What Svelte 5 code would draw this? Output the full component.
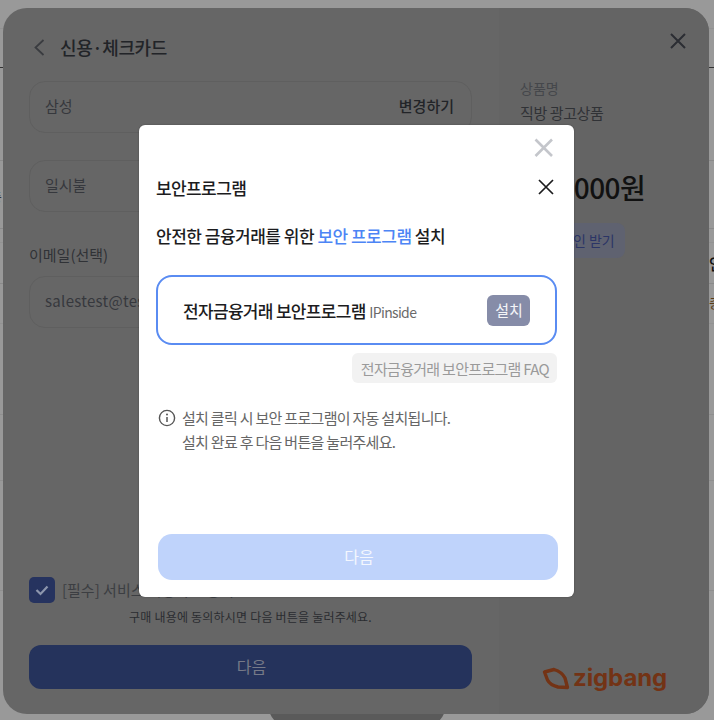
<script>
  const rows = [
    { h: 29, c: '#929292' }, { h: 39, c: '#333' }, { h: 93, c: '#8a8a8a' }, { h: 68, c: '#8a8a8a' },
    { h: 14, c: '#929292' }, { h: 41, c: '#8a8a8a' }, { h: 40, c: '#929292' }, { h: 91, c: '#8f8f8f' }, { h: 66, c: '#8f8f8f' }, { h: 110, c: '#8f8f8f' }
  ];
</script>

<div class="page">
  <div class="lines">
    {#each rows as r}
      <div class="line" style="height:{r.h}px;border-bottom-color:{r.c}"></div>
    {/each}
  </div>
  <span class="edge edge-left">총</span>
  <span class="edge edge-right">안</span>
  <span class="edge edge-right2">총</span>
  <div class="pill"></div>

  <section class="sheet">
    <div class="col-left">
      <header class="head">
        <svg width="14" height="18" viewBox="0 0 14 18" fill="none"><path d="M11.5 1 3.500 8.500l8 7.500" stroke="#3a3c40" stroke-width="1.800"/></svg>
        <h2>신용·체크카드</h2>
      </header>
      <div class="field first"><span>삼성</span><b>변경하기</b></div>
      <div class="field second"><span>일시불</span></div>
      <div class="label">이메일(선택)</div>
      <div class="field third"><span>salestest@test.com</span></div>
      <div class="grow"></div>
      <div class="agree">
        <span class="check">
          <svg width="16" height="12" viewBox="0 0 16 12" fill="none"><path d="M2.500 6 6.500 10 13.500 2.500" stroke="#8d96ad" stroke-width="2.200"/></svg>
        </span>
        <span class="agree-text">[필수] 서비스 이용약관 동의</span>
      </div>
      <p class="note">구매 내용에 동의하시면 다음 버튼을 눌러주세요.</p>
      <div class="next">다음</div>
    </div>
    <aside class="col-right">
      <svg class="close-outer" width="18" height="18" viewBox="0 0 18 18" fill="none"><path d="M2 2l14 14M16 2 2 16" stroke="#2b2d33" stroke-width="2"/></svg>
      <div class="k">상품명</div>
      <div class="v">직방 광고상품</div>
      <div class="k k2">결제금액</div>
      <div class="price">110,000원</div>
      <div class="coupon">할인 받기</div>
      <div class="grow"></div>
      <div class="logo">
        <svg width="28" height="24" viewBox="0 0 28 24" fill="none"><path d="M2.500 6 12 3.500Q20 6 23 12L25.500 21.500 16 21Q8 19 5.500 14Z" stroke="#733315" stroke-width="3.400" stroke-linejoin="round"/></svg>
        <span>zigbang</span>
      </div>
    </aside>
  </section>

  <div class="dialog">
    <div class="x-top">
      <svg width="20" height="20" viewBox="0 0 20 20" fill="none"><path d="M1.500 1.500 18 18M18 1.500 1.500 18" stroke="#c4c6cb" stroke-width="2.600"/></svg>
    </div>
    <div class="title-row">
      <h3>보안프로그램</h3>
      <svg width="16" height="16" viewBox="0 0 16 16" fill="none"><path d="M1 1l14 14M15 1 1 15" stroke="#1c1c1e" stroke-width="1.700"/></svg>
    </div>
    <p class="lead">안전한 금융거래를 위한 <em>보안 프로그램</em> 설치</p>
    <div class="card">
      <div class="card-text"><strong>전자금융거래 보안프로그램</strong> <small>IPinside</small></div>
      <div class="install">설치</div>
    </div>
    <div class="faq-row"><div class="faq">전자금융거래 보안프로그램 FAQ</div></div>
    <div class="info">
      <svg width="18" height="18" viewBox="0 0 18 18" fill="none"><circle cx="9" cy="9" r="7.600" stroke="#555" stroke-width="1.400"/><path d="M9 8v5" stroke="#555" stroke-width="1.500"/><circle cx="9" cy="5.400" r="1" fill="#555"/></svg>
      <p>설치 클릭 시 보안 프로그램이 자동 설치됩니다.<br />설치 완료 후 다음 버튼을 눌러주세요.</p>
    </div>
    <div class="grow"></div>
    <div class="dialog-next"><span>다음</span></div>
  </div>
</div>

<style>
  :global(body) {
    margin: 0;
    background: #999;
  }
  .page {
    position: relative;
    width: 714px;
    height: 720px;
    overflow: hidden;
    background: #999;
    font-family: "Noto Sans CJK KR", "Noto Sans", sans-serif;
    color: #2a2c30;
  }
  .lines {
    display: flex;
    flex-direction: column;
  }
  .line {
    box-sizing: border-box;
    border-bottom: 1px solid #8f8f8f;
  }
  .edge {
    position: absolute;
    font-size: 14px;
    line-height: 20px;
    color: #333;
  }
  .edge-left { left: -11px; top: 186px; }
  .edge-right { left: 709px; top: 253px; font-size: 16px; font-weight: 500; color: #111; }
  .edge-right2 { left: 709px; top: 292px; color: #5a3d18; }
  .pill {
    position: absolute;
    left: 268px;
    top: 680px;
    width: 178px;
    height: 48px;
    border-radius: 24px;
    background: #5a5a5a;
  }
  .sheet {
    position: absolute;
    left: 3px;
    top: 8px;
    width: 706px;
    height: 706px;
    display: flex;
    border-radius: 24px;
    background: #666;
    overflow: hidden;
  }
  .col-left {
    width: 496px;
    box-sizing: border-box;
    padding: 0 27px 25px 26px;
    display: flex;
    flex-direction: column;
  }
  .col-right {
    position: relative;
    flex: 1;
    box-sizing: border-box;
    padding: 70px 0 22px 21px;
    display: flex;
    flex-direction: column;
    background: #646464;
  }
  .grow { flex: 1; }
  .head {
    height: 73px;
    box-sizing: border-box;
    display: flex;
    align-items: center;
    gap: 14px;
    padding: 6px 0 0 3px;
  }
  h2 {
    margin: 0 0 2px;
    font-size: 18px;
    font-weight: 500;
    letter-spacing: -0.4px;
    color: #222428;
  }
  .field {
    height: 52px;
    box-sizing: border-box;
    border: 1px solid #5f5f5f;
    border-radius: 16px;
    padding: 0 17px 3px 15px;
    display: flex;
    align-items: center;
    justify-content: space-between;
    font-size: 15px;
    color: #36383d;
  }
  .field b {
    font-weight: 500;
    color: #222428;
  }
  .second { margin-top: 27px; }
  .label {
    margin-top: 31px;
    height: 24px;
    font-size: 15px;
    line-height: 24px;
    color: #303236;
  }
  .third { margin-top: 9px; letter-spacing: 0.3px; }
  .agree {
    display: flex;
    align-items: center;
    gap: 7px;
    font-size: 15px;
    color: #3c3e42;
  }
  .agree-text { margin-top: -2px; }
  .check {
    width: 26px;
    height: 26px;
    border-radius: 5px;
    background: #26335f;
    display: flex;
    align-items: center;
    justify-content: center;
  }
  .note {
    margin: 5px 0 19px;
    text-align: center;
    font-size: 12px;
    line-height: 18px;
    letter-spacing: 0.2px;
    color: #2a2c30;
  }
  .next {
    height: 44px;
    box-sizing: border-box;
    padding: 0 0 3px 2px;
    border-radius: 12px;
    background: #25335c;
    display: flex;
    align-items: center;
    justify-content: center;
    font-size: 16px;
    color: #767a88;
  }
  .close-outer {
    position: absolute;
    right: 22px;
    top: 24px;
  }
  .k {
    font-size: 14px;
    line-height: 20px;
    color: #45474b;
  }
  .v {
    margin-top: 5px;
    font-size: 15px;
    line-height: 20px;
    letter-spacing: -0.4px;
    color: #303236;
  }
  .k2 { margin-top: 17px; }
  .price {
    margin-top: 10px;
    font-size: 28px;
    line-height: 34px;
    font-weight: 500;
    letter-spacing: -0.6px;
    color: #111;
  }
  .coupon {
    align-self: flex-start;
    margin-top: 19px;
    height: 35px;
    box-sizing: border-box;
    padding: 0 10px 2px 40px;
    border-radius: 8px;
    background: #5f6270;
    display: flex;
    align-items: center;
    font-size: 14px;
    color: #2b3566;
  }
  .logo {
    display: flex;
    align-items: center;
    gap: 3px;
    margin-left: 22px;
    color: #733315;
    font-family: "Inter", sans-serif;
    font-weight: 700;
    font-size: 24px;
    line-height: 28px;
    letter-spacing: -0.1px;
  }
  .dialog {
    position: absolute;
    left: 139px;
    top: 125px;
    width: 435px;
    height: 472px;
    box-sizing: border-box;
    padding: 0 17px 17px;
    display: flex;
    flex-direction: column;
    border-radius: 6px;
    background: #fff;
    box-shadow: 0 0 2px rgba(0, 0, 0, 0.3);
  }
  .x-top {
    position: absolute;
    right: 20px;
    top: 13px;
    height: 20px;
  }
  .title-row {
    margin-top: 50px;
    height: 24px;
    display: flex;
    align-items: center;
    justify-content: space-between;
    padding-right: 3px;
  }
  h3 {
    margin: 0;
    font-size: 17px;
    font-weight: 500;
    letter-spacing: -0.6px;
    color: #1c1c1e;
  }
  .lead {
    margin: 25px 0 0;
    font-size: 17px;
    line-height: 24px;
    font-weight: 500;
    letter-spacing: -0.5px;
    color: #1c1c1e;
  }
  .lead em {
    font-style: normal;
    color: #4d85f5;
  }
  .card {
    margin-top: 27px;
    height: 70px;
    box-sizing: border-box;
    border: 2px solid #5a8cf2;
    border-radius: 16px;
    padding: 0 25px 0 25px;
    display: flex;
    align-items: center;
    justify-content: space-between;
  }
  .card-text strong {
    font-size: 17px;
    font-weight: 500;
    letter-spacing: -0.68px;
    color: #1c1c1e;
  }
  .card-text small {
    font-size: 14px;
    letter-spacing: -0.65px;
    color: #6a6a6a;
  }
  .install {
    width: 43px;
    height: 31px;
    box-sizing: border-box;
    padding: 0 0 1px 1px;
    border-radius: 6px;
    background: #868ca8;
    color: #f4f5f8;
    font-size: 15px;
    display: flex;
    align-items: center;
    justify-content: center;
  }
  .faq-row {
    margin-top: 8px;
    display: flex;
    justify-content: flex-end;
  }
  .faq {
    height: 30px;
    padding: 0 8px 0 9px;
    border-radius: 6px;
    background: #f2f2f2;
    color: #9a9a9a;
    font-size: 15px;
    letter-spacing: -0.7px;
    display: flex;
    align-items: center;
  }
  .info {
    margin-top: 23px;
    padding-left: 2px;
    display: flex;
    gap: 6px;
    align-items: flex-start;
  }
  .info svg { margin-top: 3px; }
  .info p {
    margin: 0;
    font-size: 15px;
    line-height: 24px;
    letter-spacing: -0.7px;
    color: #666;
  }
  .dialog-next {
    margin: 0 -1px 0 2px;
    height: 46px;
    box-sizing: border-box;
    padding: 0 0 3px 2px;
    border-radius: 14px;
    background: #bfd3fb;
    color: #f4f7fe;
    font-size: 16px;
    display: flex;
    align-items: center;
    justify-content: center;
  }
</style>
